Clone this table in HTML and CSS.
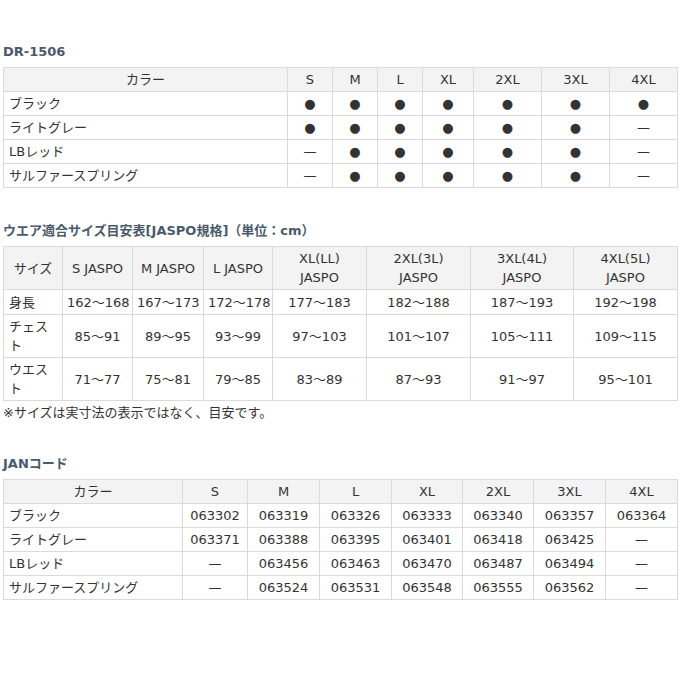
FILE: index.html
```html
<!DOCTYPE html>
<html lang="ja">
<head>
<meta charset="utf-8">
<link rel="stylesheet" href="styles.css">
</head>
<body>
<div class="page">
  <section class="block first">
    <h2 class="title">DR-1506</h2>
    <table class="grid">
      <colgroup>
        <col class="c284"><col class="c45"><col class="c45"><col class="c45"><col class="c51"><col class="c68"><col class="c68"><col class="c68">
      </colgroup>
      <thead>
        <tr><th>カラー</th><th>S</th><th>M</th><th>L</th><th>XL</th><th>2XL</th><th>3XL</th><th>4XL</th></tr>
      </thead>
      <tbody>
        <tr><td class="name">ブラック</td><td>●</td><td>●</td><td>●</td><td>●</td><td>●</td><td>●</td><td>●</td></tr>
        <tr><td class="name">ライトグレー</td><td>●</td><td>●</td><td>●</td><td>●</td><td>●</td><td>●</td><td>—</td></tr>
        <tr><td class="name">LBレッド</td><td>—</td><td>●</td><td>●</td><td>●</td><td>●</td><td>●</td><td>—</td></tr>
        <tr><td class="name">サルファースプリング</td><td>—</td><td>●</td><td>●</td><td>●</td><td>●</td><td>●</td><td>—</td></tr>
      </tbody>
    </table>
  </section>

  <section class="block">
    <h2 class="title">ウエア適合サイズ目安表[JASPO規格]（単位：cm）</h2>
    <table class="grid size">
      <colgroup>
        <col class="c59"><col class="c70"><col class="c71"><col class="c69"><col class="c94"><col class="c104"><col class="c103"><col class="c104">
      </colgroup>
      <thead>
        <tr><th>サイズ</th><th>S JASPO</th><th>M JASPO</th><th>L JASPO</th><th>XL(LL)<br>JASPO</th><th>2XL(3L)<br>JASPO</th><th>3XL(4L)<br>JASPO</th><th>4XL(5L)<br>JASPO</th></tr>
      </thead>
      <tbody>
        <tr><td class="name">身長</td><td>162～168</td><td>167～173</td><td>172～178</td><td>177～183</td><td>182～188</td><td>187～193</td><td>192～198</td></tr>
        <tr><td class="name">チェスト</td><td>85～91</td><td>89～95</td><td>93～99</td><td>97～103</td><td>101～107</td><td>105～111</td><td>109～115</td></tr>
        <tr><td class="name">ウエスト</td><td>71～77</td><td>75～81</td><td>79～85</td><td>83～89</td><td>87～93</td><td>91～97</td><td>95～101</td></tr>
      </tbody>
    </table>
    <p class="note">※サイズは実寸法の表示ではなく、目安です。</p>
  </section>

  <section class="block last">
    <h2 class="title">JANコード</h2>
    <table class="grid">
      <colgroup>
        <col class="c179"><col class="c65"><col class="c72"><col class="c72"><col class="c71"><col class="c71"><col class="c72"><col class="c72">
      </colgroup>
      <thead>
        <tr><th>カラー</th><th>S</th><th>M</th><th>L</th><th>XL</th><th>2XL</th><th>3XL</th><th>4XL</th></tr>
      </thead>
      <tbody>
        <tr><td class="name">ブラック</td><td>063302</td><td>063319</td><td>063326</td><td>063333</td><td>063340</td><td>063357</td><td>063364</td></tr>
        <tr><td class="name">ライトグレー</td><td>063371</td><td>063388</td><td>063395</td><td>063401</td><td>063418</td><td>063425</td><td>—</td></tr>
        <tr><td class="name">LBレッド</td><td>—</td><td>063456</td><td>063463</td><td>063470</td><td>063487</td><td>063494</td><td>—</td></tr>
        <tr><td class="name">サルファースプリング</td><td>—</td><td>063524</td><td>063531</td><td>063548</td><td>063555</td><td>063562</td><td>—</td></tr>
      </tbody>
    </table>
  </section>
</div>
</body>
</html>
```

FILE: styles.css
```css
html, body {
  margin: 0;
  padding: 0;
  background: #ffffff;
}

body {
  font-family: "DejaVu Sans", "Noto Sans CJK JP", sans-serif;
  font-size: 13px;
  color: #333333;
}

.page {
  padding: 43px 3px 0 3px;
}

.block {
  margin-top: 34px;
}

.block.first {
  margin-top: 0;
}

.block.last {
  margin-top: 33px;
}

.title {
  margin: 0 0 6px 0;
  font-size: 13px;
  line-height: 18px;
  font-weight: bold;
  color: #4b5a6b;
  font-family: "DejaVu Sans", "Noto Sans CJK JP", sans-serif;
}

.grid {
  width: 674px;
  table-layout: fixed;
  border-collapse: collapse;
}

.grid th,
.grid td {
  border: 1px solid #dadada;
  padding: 2px 4px;
  line-height: 19px;
  text-align: center;
  font-weight: normal;
  white-space: nowrap;
}

.grid th {
  background: #f3f3f3;
}

.grid td.name {
  text-align: left;
  padding-left: 5px;
}

.size td.name {
  white-space: normal;
  padding-right: 5px;
}

.size td {
  height: 38px;
}

.size tbody tr:first-child td {
  height: 20px;
}

.note {
  margin: 3px 0 0 0;
  line-height: 18px;
}

.c284 { width: 284px; }
.c45 { width: 45px; }
.c51 { width: 51px; }
.c68 { width: 68px; }
.c59 { width: 59px; }
.c70 { width: 70px; }
.c71 { width: 71px; }
.c69 { width: 69px; }
.c94 { width: 94px; }
.c104 { width: 104px; }
.c103 { width: 103px; }
.c179 { width: 179px; }
.c65 { width: 65px; }
.c72 { width: 72px; }
```
